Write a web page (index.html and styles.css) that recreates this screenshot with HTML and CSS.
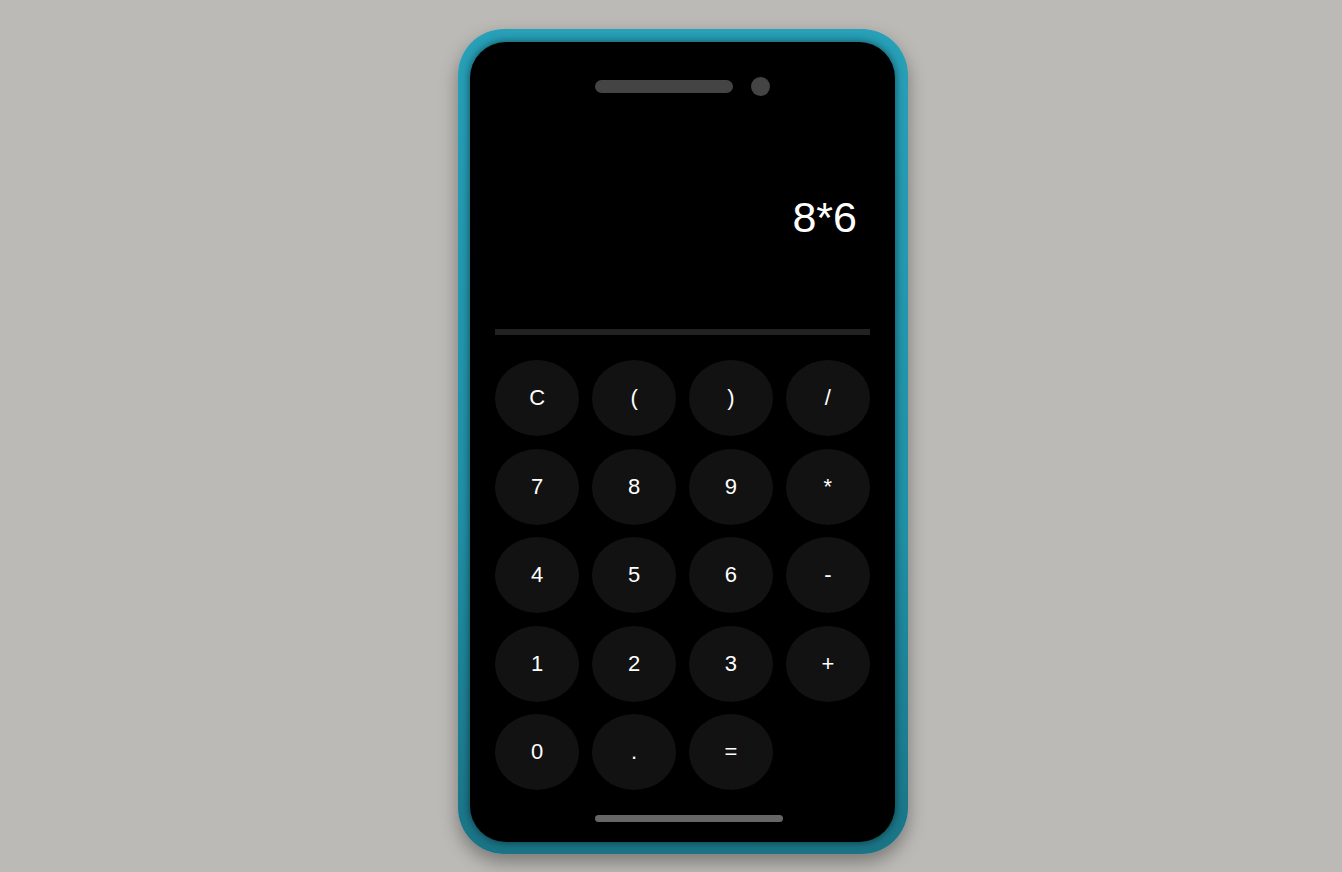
FILE: index.html
```html
<!DOCTYPE html>
<html lang="en">
<head>
<meta charset="utf-8">
<title>Calculator</title>
<link rel="stylesheet" href="styles.css">
</head>
<body>
<div class="stage">
  <div class="phone">
    <div class="screen">
      <div class="notch">
        <span class="speaker"></span>
        <span class="camera"></span>
      </div>
      <div class="display"><span class="expr">8*6</span></div>
      <div class="divider"></div>
      <div class="keys">
        <button class="key">C</button>
        <button class="key">(</button>
        <button class="key">)</button>
        <button class="key">/</button>
        <button class="key">7</button>
        <button class="key">8</button>
        <button class="key">9</button>
        <button class="key">*</button>
        <button class="key">4</button>
        <button class="key">5</button>
        <button class="key">6</button>
        <button class="key">-</button>
        <button class="key">1</button>
        <button class="key">2</button>
        <button class="key">3</button>
        <button class="key">+</button>
        <button class="key">0</button>
        <button class="key">.</button>
        <button class="key">=</button>
      </div>
      <div class="home-bar"></div>
    </div>
  </div>
</div>
</body>
</html>
```

FILE: styles.css
```css
* { box-sizing: border-box; }
html, body { margin: 0; height: 100%; }
body {
  background: #bcbab6;
  font-family: "Liberation Sans", Arial, sans-serif;
  overflow: hidden;
}
.stage {
  display: flex;
  justify-content: center;
  padding: 29px 0 0 24px;
}
.phone {
  width: 450px;
  height: 825px;
  padding: 13px 13px 12px 12px;
  border-radius: 46px;
  background: linear-gradient(180deg, #27a0b8 0%, #2090a6 60%, #1a7486 100%);
  box-shadow: 0 8px 18px rgba(0,0,0,0.35);
}
.screen {
  width: 425px;
  height: 800px;
  background: #000;
  border-radius: 36px;
  padding: 25px 25px 20px 25px;
  display: flex;
  flex-direction: column;
  box-shadow: 0 0 8px rgba(0,0,0,0.55);
}
.notch {
  margin-top: 9.5px;
  height: 19px;
  display: flex;
  justify-content: center;
  align-items: center;
  gap: 18px;
}
.speaker {
  width: 138px;
  height: 13px;
  border-radius: 7px;
  background: #444;
}
.camera {
  width: 19px;
  height: 19px;
  border-radius: 50%;
  background: #444;
}
.display {
  height: 233.5px;
  display: flex;
  justify-content: flex-end;
  align-items: center;
  padding: 10px 13px 0 0;
}
.expr {
  color: #fff;
  font-size: 43px;
  line-height: 1.15;
}
.divider {
  height: 6px;
  background: #222;
}
.keys {
  margin-top: 25px;
  display: grid;
  grid-template-columns: repeat(4, 1fr);
  grid-auto-rows: 76px;
  gap: 12.5px;
}
.key {
  border: none;
  border-radius: 50%;
  background: #121212;
  color: #fff;
  font-family: "Liberation Sans", Arial, sans-serif;
  font-size: 22px;
  padding: 0;
}
.home-bar {
  margin: 25px 0 0 100px;
  width: 188px;
  height: 7px;
  border-radius: 4px;
  background: #666;
}
```
